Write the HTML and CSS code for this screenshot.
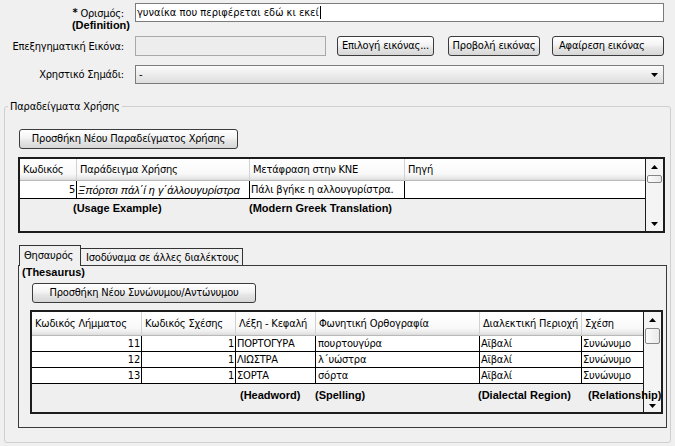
FILE: index.html
```html
<!DOCTYPE html>
<html lang="el">
<head>
<meta charset="utf-8">
<title>Λήμμα</title>
<link rel="stylesheet" href="styles.css">
</head>
<body>
<div class="page">
  <div class="frow frow-def">
    <div class="flabel">
      <div class="lbl"><span class="req">*</span> Ορισμός:</div>
      <div class="en def-en">(Definition)</div>
    </div>
    <div class="tinput wide"><span>γυναίκα που περιφέρεται εδώ κι εκεί</span><span class="caret"></span></div>
  </div>
  <div class="frow frow-img">
    <div class="flabel"><div class="lbl">Επεξηγηματική Εικόνα:</div></div>
    <div class="tinput disabled"></div>
    <button class="btn b-choose">Επιλογή εικόνας...</button>
    <button class="btn b-view">Προβολή εικόνας</button>
    <button class="btn b-remove">Αφαίρεση εικόνας</button>
  </div>
  <div class="frow frow-sel">
    <div class="flabel"><div class="lbl">Χρηστικό Σημάδι:</div></div>
    <div class="combo"><span class="combo-val">-</span><svg class="combo-arrow" width="7" height="4" viewBox="0 0 7 4"><path d="M0 0H7L3.5 4Z"/></svg></div>
  </div>

  <fieldset class="group">
    <legend>Παραδείγματα Χρήσης</legend>
    <button class="btn b-add1">Προσθήκη Νέου Παραδείγματος Χρήσης</button>

    <div class="grid t1">
      <div class="gmain">
        <div class="grow ghead">
          <div class="th">Κωδικός</div>
          <div class="th">Παράδειγμα Χρήσης</div>
          <div class="th">Μετάφραση στην ΚΝΕ</div>
          <div class="th">Πηγή</div>
        </div>
        <div class="grow gdata">
          <div class="td num">5</div>
          <div class="td it">Ξπόρτσι πάλ΄ί η γ΄άλλουγυρίστρα</div>
          <div class="td">Πάλι βγήκε η αλλουγυρίστρα.</div>
          <div class="td"></div>
        </div>
        <div class="gempty">
          <span></span>
          <span class="en">(Usage Example)</span>
          <span class="en">(Modern Greek Translation)</span>
        </div>
      </div>
      <div class="vscroll">
        <div class="sb-up"><svg width="7" height="4" viewBox="0 0 7 4"><path d="M0 4H7L3.5 0Z"/></svg></div>
        <div class="sb-thumb"></div>
        <div class="sb-fill"></div>
        <div class="sb-down"><svg width="7" height="4" viewBox="0 0 7 4"><path d="M0 0H7L3.5 4Z"/></svg></div>
      </div>
    </div>

    <div class="tabs">
      <div class="tabstrip">
        <div class="tab active">Θησαυρός</div>
        <div class="tab inactive">Ισοδύναμα σε άλλες διαλέκτους</div>
      </div>
      <div class="tabpanel">
        <div class="en thes">(Thesaurus)</div>
        <button class="btn b-add2">Προσθήκη Νέου Συνώνυμου/Αντώνυμου</button>

        <div class="grid t2">
          <div class="gmain">
            <div class="grow ghead">
              <div class="th">Κωδικός Λήμματος</div>
              <div class="th">Κωδικός Σχέσης</div>
              <div class="th">Λέξη - Κεφαλή</div>
              <div class="th">Φωνητική Ορθογραφία</div>
              <div class="th">Διαλεκτική Περιοχή</div>
              <div class="th">Σχέση</div>
            </div>
            <div class="grow gdata">
              <div class="td num">11</div>
              <div class="td num">1</div>
              <div class="td">ΠΟΡΤΟΓΥΡΑ</div>
              <div class="td pad">πουρτουγύρα</div>
              <div class="td">Αϊβαλί</div>
              <div class="td">Συνώνυμο</div>
            </div>
            <div class="grow gdata">
              <div class="td num">12</div>
              <div class="td num">1</div>
              <div class="td">ΛΙΩΣΤΡΑ</div>
              <div class="td pad">λ΄υώστρα</div>
              <div class="td">Αϊβαλί</div>
              <div class="td">Συνώνυμο</div>
            </div>
            <div class="grow gdata">
              <div class="td num">13</div>
              <div class="td num">1</div>
              <div class="td">ΣΟΡΤΑ</div>
              <div class="td pad">σόρτα</div>
              <div class="td">Αϊβαλί</div>
              <div class="td">Συνώνυμο</div>
            </div>
            <div class="gempty">
              <span></span>
              <span class="en">(Headword)</span>
              <span class="en">(Spelling)</span>
              <span class="en">(Dialectal Region)</span>
              <span class="en">(Relationship)</span>
            </div>
          </div>
          <div class="vscroll">
            <div class="sb-up"><svg width="7" height="4" viewBox="0 0 7 4"><path d="M0 4H7L3.5 0Z"/></svg></div>
            <div class="sb-thumb"></div>
            <div class="sb-fill"></div>
            <div class="sb-down"><svg width="7" height="4" viewBox="0 0 7 4"><path d="M0 0H7L3.5 4Z"/></svg></div>
          </div>
        </div>
      </div>
    </div>
  </fieldset>
</div>
</body>
</html>
```

FILE: styles.css
```css
* { box-sizing: border-box; }
html, body { margin: 0; padding: 0; }
body {
  width: 675px;
  height: 446px;
  overflow: hidden;
  background: #f0f0f0;
  color: #000;
  font-family: "DejaVu Sans Condensed", "DejaVu Sans", sans-serif;
  font-size: 11px;
  letter-spacing: -0.2px;
}
.en {
  font-family: "Liberation Sans", Arial, sans-serif;
  font-weight: bold;
  font-size: 11px;
  letter-spacing: 0;
  white-space: nowrap;
}
.page { padding-top: 3px; }

/* form rows */
.frow { display: flex; }
.frow-def { height: 33px; align-items: flex-start; }
.frow-img { height: 20px; align-items: center; margin-bottom: 9px; }
.frow-sel { height: 19px; align-items: center; }
.flabel { width: 124px; flex: none; text-align: right; }
.frow-def .flabel { padding-top: 3px; }
.lbl { line-height: 13px; white-space: nowrap; }
.req { font-weight: bold; vertical-align: 1px; }
.def-en { line-height: 11px; margin-right: -6px; }

.tinput {
  flex: none;
  margin-left: 11px;
  height: 19px;
  border: 1px solid #7b7b7b;
  background: #fff;
  display: flex;
  align-items: center;
  padding-left: 1px;
  white-space: nowrap;
}
.tinput.wide { width: 529px; letter-spacing: 0; }
.tinput.disabled { width: 191px; height: 20px; background: #ededed; border-color: #a9a9a9; }
.caret { width: 1px; height: 13px; background: #000; margin-left: 1px; }

.btn {
  flex: none;
  font: inherit;
  letter-spacing: inherit;
  color: #000;
  height: 20px;
  padding: 0;
  border: 1px solid #3c3c3c;
  border-radius: 3px;
  background: linear-gradient(#ffffff, #f3f3f3 45%, #e6e6e6 60%, #d6d6d6);
  white-space: nowrap;
  text-align: center;
  line-height: 18px;
}
.b-choose { width: 97px; margin-left: 11px; }
.b-view { width: 92px; margin-left: 14px; }
.b-remove { width: 112px; margin-left: 12px; text-align: left; padding-left: 6px; }

.combo {
  flex: none;
  margin-left: 11px;
  width: 529px;
  height: 19px;
  border: 1px solid #7b7b7b;
  background: linear-gradient(#fbfbfb, #ececec 50%, #dedede);
  display: flex;
  align-items: center;
  justify-content: space-between;
  padding: 0 5px 0 3px;
}
.combo-arrow { display: block; }

/* group box */
.group {
  margin: 16px 0 0 4px;
  width: 667px;
  min-width: 0;
  padding: 0 0 14px 0;
  border: 1px solid #cfcfcf;
  border-radius: 3px;
}
.group legend { margin-left: 3px; padding: 0 2px; line-height: 13px; }
.b-add1 { display: block; margin: 16px 0 0 14px; width: 219px; }

/* grids */
.grid {
  display: flex;
  border: 2px solid #1c1c1c;
  background: #efefef;
}
.gmain {
  flex: 1;
  min-width: 0;
  display: flex;
  flex-direction: column;
  z-index: 1;
}
.grow { display: grid; flex: none; }
.th {
  display: flex;
  align-items: center;
  padding-left: 3px;
  white-space: nowrap;
  overflow: hidden;
  background: linear-gradient(#ffffff, #f9f9f9 70%, #ebebeb 88%, #dcdcdc);
  border-right: 1px solid #d2d2d2;
  border-bottom: 1px solid #b9b9b9;
}
.th:last-child { border-right: none; }
.td {
  display: flex;
  align-items: center;
  white-space: nowrap;
  overflow: hidden;
  background: #fff;
  border-right: 1px solid #000;
  border-bottom: 1px solid #000;
  padding-left: 1px;
}
.td:last-child { border-right: none; }
.td.num { justify-content: flex-end; padding: 0 1px 0 0; }
.td.it { font-family: "Liberation Sans", Arial, sans-serif; font-style: italic; letter-spacing: 0; }
.td.pad { padding-left: 2px; }
.gempty { flex: 1; display: grid; align-content: start; line-height: 13px; }

.vscroll {
  flex: none;
  width: 18px;
  border-left: 1px solid #1c1c1c;
  background: #f4f4f4;
  display: flex;
  flex-direction: column;
  align-items: center;
}
.sb-up, .sb-down { flex: none; width: 100%; display: flex; align-items: center; justify-content: center; }
.sb-up svg, .sb-down svg { display: block; }
.sb-thumb {
  flex: none;
  width: 15px;
  border: 1px solid #858585;
  border-radius: 2px;
  background: linear-gradient(90deg, #fbfbfb, #e9e9e9);
}
.sb-fill { flex: 1; }

.t1 { margin: 8px 0 0 13px; width: 647px; height: 76px; }
.t1 .grow { grid-template-columns: 57px 173px 155px 240px; }
.t1 .ghead { height: 22px; }
.t1 .gdata { height: 18px; }
.t1 .gempty { grid-template-columns: 53px 176px auto; padding-top: 3px; }
.t1 .sb-up { height: 16px; }
.t1 .sb-thumb { height: 8px; }
.t1 .sb-down { height: 14px; }

/* tabs */
.tabs { margin: 12px 0 0 13px; width: 649px; display: flex; flex-direction: column; }
.tabstrip {
  display: flex;
  align-items: flex-end;
  height: 21px;
  padding-left: 1px;
  margin-bottom: -1px;
  z-index: 1;
}
.tab {
  flex: none;
  border: 1px solid #333;
  border-bottom: none;
  background: #f0f0f0;
  white-space: nowrap;
  line-height: 13px;
}
.tab.active { width: 62px; height: 21px; padding: 3px 0 0 4px; }
.tab.inactive { width: 162px; height: 17px; border-left: none; padding: 2px 0 0 5px; margin-bottom: 1px; }
.tabpanel { border: 1px solid #3a3a3a; height: 163px; }
.thes { padding-left: 3px; line-height: 12px; }
.b-add2 { display: block; margin: 5px 0 0 13px; width: 224px; }

.t2 { margin: 7px 0 0 11px; width: 633px; height: 104px; }
.t2 .grow { grid-template-columns: 110px 94px 80px 164px 102px 61px; }
.t2 .ghead { height: 24px; }
.t2 .gdata { height: 16px; }
.t2 .gempty { grid-template-columns: 208px 75px 163px 110px auto; padding-top: 5px; }
.t2 .sb-up { height: 16px; }
.t2 .sb-thumb { height: 16px; }
.t2 .sb-down { height: 13px; }
```
